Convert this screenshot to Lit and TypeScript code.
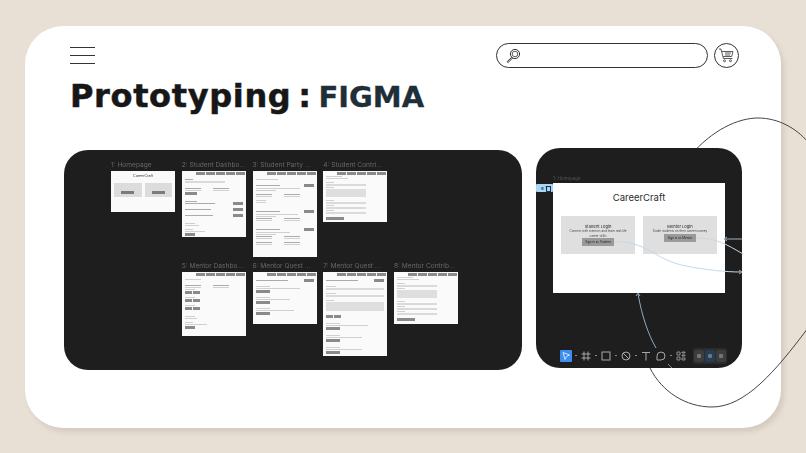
import { LitElement, html, css, svg } from "lit";
import { customElement } from "lit/decorators.js";

// mini wireframe rows: n = nav, t = text line, h = heading line, f = field, a = big area,
// b = button, r = text line with a button on the right, c = two columns of text, s = spacer
const frames = [
  { name: "1: Homepage", h: 41, rows: [] as string[] },
  { name: "2: Student Dashbo...", h: 66, rows: ["n", "s2", "h8", "f40", "s3", "c", "b12", "s4", "h12", "r30", "s1", "r26", "s1", "r28", "s4", "t10", "t14", "s1", "t8", "t20", "b10"] },
  { name: "3: Student Party ...", h: 86, rows: ["n", "s2", "t22", "s2", "r24", "t44", "t20", "s1", "c", "s1", "t10", "t10", "s5", "r24", "t42", "t20", "c", "s5", "r24", "t34", "t20", "c", "s1", "c"] },
  { name: "4: Student Contri...", h: 51, rows: ["n", "t16", "t22", "s1", "t8", "f40", "t8", "a", "s1", "t8", "f40", "t8", "f40", "t8", "f40", "s1", "b18"] },
  { name: "5: Mentor Dashbo...", h: 64, rows: ["n", "s1", "t16", "s3", "c", "t10", "d", "s1", "t10", "d", "s1", "t10", "d", "s4", "t10", "t12", "s1", "t8", "t22", "b10"] },
  { name: "6: Mentor Quest ...", h: 52, rows: ["n", "s1", "r32", "s2", "t14", "t44", "b14", "s2", "t14", "t34", "b14", "s2", "t14", "t38", "b14"] },
  { name: "7: Mentor Quest ...", h: 84, rows: ["n", "s1", "r32", "s2", "t10", "f58", "s1", "t10", "f58", "s1", "t8", "a2", "s2", "d", "s3", "t14", "t42", "b14", "s3", "t14", "t36", "b14", "s3", "t14", "t36", "b14"] },
  { name: "8: Mentor Contrib...", h: 52, rows: ["n", "t16", "t22", "s1", "t8", "f40", "t8", "a", "s1", "t8", "f40", "t8", "f40", "t8", "f40", "s1", "b18"] },
];

const tools = ["move", "frame", "rect", "pen", "text", "bubble", "widget"];

@customElement("app-root")
export class AppRoot extends LitElement {
  static styles = css`
    * {
      box-sizing: border-box;
    }

    :host {
      display: block;
      box-sizing: border-box;
      height: 453px;
      overflow: hidden;
      padding: 26px 25px 25px;
      background: #e8dfd5;
      font-family: "Inter", "Liberation Sans", sans-serif;
    }

    .card {
      position: relative;
      height: 402px;
      padding: 17px 0 0 39px;
      border-radius: 38px;
      background: #fff;
      box-shadow: 3px 4px 5px #d4cbc0;
    }

    .curve {
      position: absolute;
      left: -25px;
      top: -26px;
      width: 806px;
      height: 453px;
      pointer-events: none;
    }

    .topbar {
      display: flex;
      align-items: center;
      justify-content: space-between;
      height: 25px;
      margin-right: 42px;
      padding-left: 6px;
    }

    .burger {
      display: flex;
      flex-direction: column;
      gap: 7px;
      width: 25px;
    }

    .burger span {
      height: 1px;
      background: #333;
    }

    .tools {
      display: flex;
      align-items: center;
      gap: 6px;
    }

    .search {
      display: flex;
      align-items: center;
      width: 212px;
      height: 25px;
      padding-left: 8px;
      border: 1px solid #333;
      border-radius: 13px;
    }

    .cart {
      display: flex;
      align-items: center;
      justify-content: center;
      width: 25px;
      height: 25px;
      border: 1px solid #333;
      border-radius: 50%;
    }

    h1 {
      margin: 8px 0 0 6px;
      height: 40px;
      font: 700 32px/40px "DejaVu Sans", sans-serif;
      letter-spacing: 0.65px;
      word-spacing: -5px;
      color: #171717;
      -webkit-text-stroke: 0.5px currentColor;
      white-space: nowrap;
    }

    h1 span {
      color: #1f2f3a;
      font-size: 29px;
      letter-spacing: 0;
      -webkit-text-stroke: 0.3px currentColor;
    }

    .panels {
      position: relative;
      z-index: 1;
      display: flex;
      align-items: flex-start;
      gap: 14px;
      margin-top: 32px;
    }

    .panel {
      flex: none;
      border-radius: 24px;
      background: #1e1e1e;
    }

    .overview {
      display: grid;
      grid-template-columns: repeat(5, 64px);
      grid-auto-rows: min-content;
      column-gap: 6.75px;
      row-gap: 5px;
      width: 458px;
      height: 220px;
      margin-top: 2px;
      padding: 11px 0 0 47px;
    }

    .cell {
      min-width: 0;
    }

    .cell.skip {
      grid-column-start: 2;
    }

    .label {
      height: 10px;
      font-size: 6.6px;
      line-height: 8px;
      color: #686868;
      white-space: nowrap;
      filter: blur(0.4px);
    }

    .frame {
      display: flex;
      flex-direction: column;
      gap: 1px;
      padding: 1px 3px;
      overflow: hidden;
      background: #fafafa;
      filter: blur(0.5px);
    }

    .home {
      display: block;
      padding-top: 3px;
      text-align: center;
      font-size: 3.6px;
      line-height: 5px;
      color: #333;
    }

    .home .boxes {
      display: flex;
      justify-content: center;
      gap: 3px;
      margin-top: 4px;
    }

    .home .box {
      display: flex;
      justify-content: center;
      align-items: flex-end;
      width: 28px;
      height: 14px;
      padding-bottom: 3px;
      background: #dcdcdc;
    }

    .home .box i {
      width: 13px;
      height: 3px;
      background: #7b7b7b;
    }

    .nav {
      display: flex;
      justify-content: flex-end;
      gap: 1px;
      margin-right: -2px;
    }

    .nav i {
      width: 9px;
      height: 3px;
      background: #8a8a8a;
    }

    .t {
      height: 1px;
      background: #d0d0d0;
    }

    .h {
      height: 1px;
      background: #ababab;
    }

    .f {
      height: 2px;
      background: #dadada;
    }

    .a {
      height: 8px;
      background: #dedede;
    }

    .a2 {
      height: 9px;
      background: #dedede;
    }

    .b {
      height: 3px;
      background: #8a8a8a;
    }

    .split {
      display: flex;
      align-items: center;
      justify-content: space-between;
    }

    .split b {
      width: 10px;
      height: 3px;
      background: #8a8a8a;
    }

    .duo {
      display: flex;
      gap: 1px;
    }

    .duo i {
      width: 7px;
      height: 3px;
      background: #8a8a8a;
    }

    .cols {
      display: flex;
      gap: 12px;
    }

    .cols div {
      display: flex;
      flex-direction: column;
      gap: 1px;
      width: 16px;
    }

    .detail {
      position: relative;
      display: flex;
      flex-direction: column;
      width: 206px;
      height: 220px;
      padding: 28px 0 0 17px;
    }

    .detail .label {
      height: 7px;
      font-size: 4.5px;
      line-height: 6px;
      color: #555;
    }

    .chip {
      position: absolute;
      left: 0;
      top: 36px;
      width: 17px;
      height: 8px;
      padding-left: 5px;
      border-radius: 1px;
      background: #a9d6f5;
      color: #17364c;
      font-size: 5px;
      line-height: 8px;
    }

    .chip::after {
      content: "";
      position: absolute;
      right: 2px;
      top: 2px;
      width: 3px;
      height: 4px;
      border: 1px solid #17364c;
    }

    .screen {
      display: flex;
      flex-direction: column;
      align-items: center;
      width: 172px;
      height: 110px;
      padding-top: 9px;
      background: #fff;
      color: #2d2d2d;
    }

    .screen h2 {
      margin: 0;
      height: 24px;
      font-size: 9.5px;
      font-weight: 400;
      line-height: 11px;
    }

    .logins {
      display: flex;
      gap: 8px;
      filter: blur(0.25px);
    }

    .login {
      display: flex;
      flex-direction: column;
      align-items: center;
      width: 74px;
      height: 38px;
      padding-top: 8px;
      background: #dfdfdf;
      text-align: center;
      font-size: 3px;
      line-height: 4.5px;
      color: #444;
    }

    .login strong {
      font-size: 4px;
      font-weight: 500;
      line-height: 5px;
    }

    .login span {
      width: 64px;
    }

    .login em {
      width: 32px;
      height: 8px;
      background: #9a9a9a;
      font-style: normal;
      line-height: 8px;
      color: #222;
    }

    .links {
      position: absolute;
      left: 0;
      top: 0;
      width: 210px;
      height: 220px;
      overflow: visible;
      pointer-events: none;
    }

    .toolbar {
      display: flex;
      align-items: center;
      height: 22px;
      margin: 52px 0 0 7px;
    }

    .tool {
      position: relative;
      display: flex;
      align-items: center;
      justify-content: center;
      width: 12px;
      height: 12px;
      margin-right: 8px;
      border-radius: 1px;
    }

    .tool::after {
      content: "";
      position: absolute;
      right: -5px;
      top: 5px;
      width: 2px;
      height: 1px;
      background: #888;
    }

    .tool.on {
      background: #3d8ef0;
    }

    .tool.plain {
      margin-right: 3px;
    }

    .tool.plain::after {
      display: none;
    }

    .modes {
      display: flex;
      gap: 1px;
      margin-left: 3px;
      padding: 2px 1px;
      border-radius: 3px;
      background: #2c2c2c;
    }

    .modes i {
      display: flex;
      align-items: center;
      justify-content: center;
      width: 10px;
      height: 12px;
      border-radius: 2px;
      background: #3d3d3d;
    }

    .modes i.on {
      background: #233f58;
    }

    .modes i::after {
      content: "";
      width: 4px;
      height: 4px;
      border-radius: 1px;
      background: #747474;
    }
  `;

  renderRow(row: string) {
    const kind = row.replace(/\d+$/, "");
    const size = row.slice(kind.length);
    if (kind === "n") {
      return html`<div class="nav"><i></i><i></i><i></i><i></i><i></i></div>`;
    }
    if (kind === "s") {
      return html`<div style="height:${size}px"></div>`;
    }
    if (kind === "r") {
      return html`<div class="split"><div class="h" style="width:${size}px"></div><b></b></div>`;
    }
    if (kind === "c") {
      return html`<div class="cols">
        <div><span class="h"></span><span class="t"></span></div>
        <div><span class="h"></span><span class="t"></span></div>
      </div>`;
    }
    if (kind === "d") {
      return html`<div class="duo"><i></i><i></i></div>`;
    }
    if (row === "a" || row === "a2") {
      return html`<div class=${row} style="width:${row === "a" ? 40 : 58}px"></div>`;
    }
    return html`<div class=${kind} style="width:${size}px"></div>`;
  }

  renderFrame(frame: (typeof frames)[number], i: number) {
    return html`
      <div class="cell ${i === 4 ? "skip" : ""}">
        <div class="label">${frame.name}</div>
        ${i === 0
          ? html`<div class="frame home" style="height:${frame.h}px">
              CareerCraft
              <div class="boxes">
                <div class="box"><i></i></div>
                <div class="box"><i></i></div>
              </div>
            </div>`
          : html`<div class="frame" style="height:${frame.h}px">
              ${frame.rows.map((r) => this.renderRow(r))}
            </div>`}
      </div>
    `;
  }

  renderTool(name: string) {
    const stroke = "#a8a8a8";
    const icons: Record<string, unknown> = {
      move: svg`<path d="M3 2.5 9.5 5 6.5 6.5 5 9.5Z" fill="none" stroke="#cfe4ff" />`,
      frame: svg`<path d="M4 1.5v9M8 1.5v9M1.5 4h9M1.5 8h9" fill="none" stroke=${stroke} />`,
      rect: svg`<rect x="2" y="2" width="8" height="8" fill="none" stroke=${stroke} />`,
      pen: svg`<circle cx="6" cy="6" r="4" fill="none" stroke=${stroke} /><path d="M3 3 9 9" stroke=${stroke} />`,
      text: svg`<path d="M2 2.5h8M6 2.5v8" fill="none" stroke=${stroke} />`,
      bubble: svg`<path d="M2 10V6a4 4 0 1 1 4 4Z" fill="none" stroke=${stroke} />`,
      widget: svg`<path d="M2 2h3v3H2ZM2 7h3v3H2ZM7 2h3v1H7ZM7 5h3v1H7ZM7 8h3v2H7Z" fill="none" stroke=${stroke} stroke-width="0.8" />`,
    };
    const cls = name === "move" ? "on" : name === "text" || name === "widget" ? "plain" : "";
    return html`<span class="tool ${cls}">
      <svg width="12" height="12" viewBox="0 0 12 12">${icons[name]}</svg>
    </span>`;
  }

  render() {
    return html`
      <div class="card">
        <svg class="curve" viewBox="0 0 806 453" fill="none">
          <path d="M690 156C712 130 738 118 758 118C778 118 796 128 808 142" stroke="#444" />
          <path d="M650 368C662 392 686 407 712 407C745 407 775 372 808 328" stroke="#444" />
        </svg>

        <div class="topbar">
          <div class="burger"><span></span><span></span><span></span></div>
          <div class="tools">
            <div class="search">
              <svg width="16" height="16" viewBox="0 0 16 16" fill="none" stroke="#333">
                <circle cx="10" cy="6" r="4.6" />
                <circle cx="10" cy="6" r="2.8" stroke-width="0.8" />
                <path d="M6.8 9.2 2.2 13.6 3 14.6 7.6 10" />
              </svg>
            </div>
            <div class="cart">
              <svg width="17" height="17" viewBox="0 0 17 17" fill="none" stroke="#333" stroke-width="0.8">
                <path d="M1 2h2l2.4 9.5h9" />
                <path d="M4 4.5h11l-1.3 5H5.2" />
                <path d="M7 6h6M7 8h5" />
                <circle cx="6.5" cy="13.8" r="1" />
                <circle cx="12.5" cy="13.8" r="1" />
              </svg>
            </div>
          </div>
        </div>

        <h1>Prototyping : <span>FIGMA</span></h1>

        <div class="panels">
          <div class="panel overview">
            ${frames.map((f, i) => this.renderFrame(f, i))}
          </div>

          <div class="panel detail">
            <div class="label">1: Homepage</div>
            <div class="chip">e 1</div>
            <div class="screen">
              <h2>CareerCraft</h2>
              <div class="logins">
                <div class="login">
                  <strong>Student Login</strong>
                  <span>Connect with mentors and learn real-life career skills</span>
                  <em>Sign in as Student</em>
                </div>
                <div class="login">
                  <strong>Mentor Login</strong>
                  <span>Guide students on their career journey</span>
                  <em>Sign in as Mentor</em>
                </div>
              </div>
            </div>
            <svg class="links" viewBox="0 0 210 220" fill="none" stroke="#c5d8e6">
              <path d="M78 94C110 92 118 112 150 118C170 122 190 124 205 124" stroke-width="1" />
              <path d="M160 90C180 90 190 96 207 106" stroke-width="1" />
              <path d="M188 91H206" stroke="#9db0bd" />
              <path d="M191 89 188 91 191 93" stroke="#9db0bd" />
              <path d="M203 122 206 124 203 126" stroke="#9db0bd" />
              <path d="M102 146C106 168 112 186 120 200" stroke="#93a9bc" />
              <path d="M100 148 102 145 104 148" stroke="#93a9bc" />
              <path d="M132 216 136 220" stroke="#888" />
            </svg>
            <div class="toolbar">
              ${tools.map((t) => this.renderTool(t))}
              <div class="modes"><i></i><i class="on"></i><i></i></div>
            </div>
          </div>
        </div>
      </div>
    `;
  }
}
